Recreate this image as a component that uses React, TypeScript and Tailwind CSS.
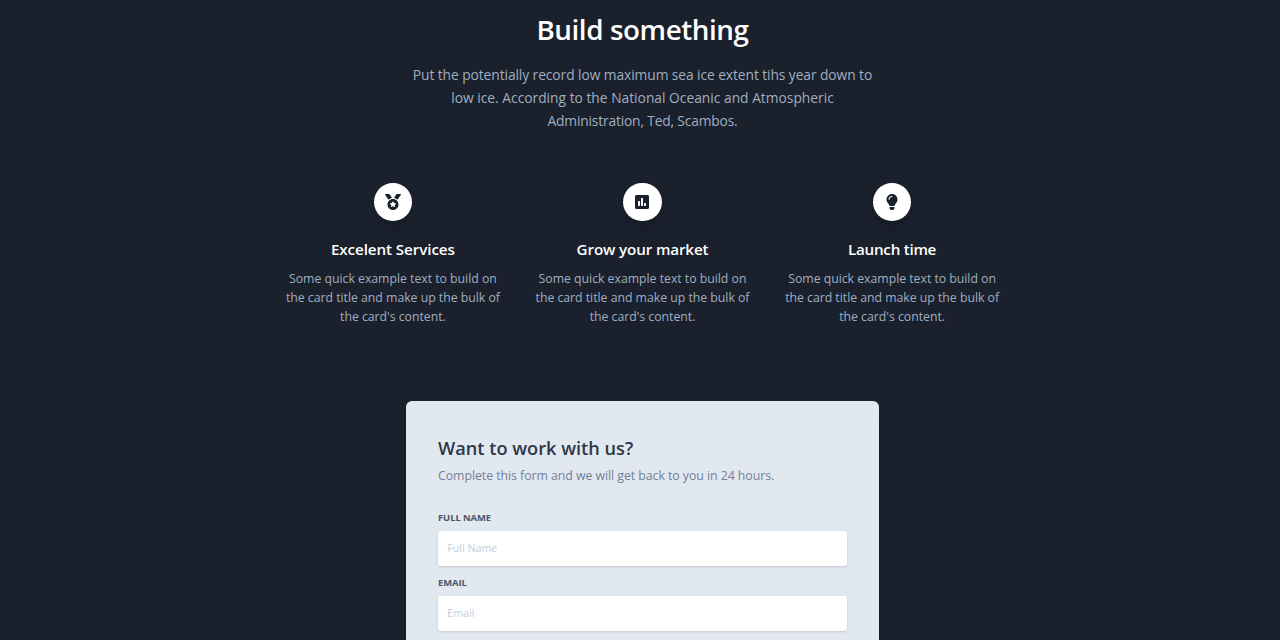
import { FaLightbulb, FaMedal, FaPoll } from "react-icons/fa";
import type { IconType } from "react-icons";

const features: { title: string; tracking: string; Icon: IconType }[] = [
  { title: "Excelent Services", tracking: "tracking-[-0.09px]", Icon: FaMedal },
  { title: "Grow your market", tracking: "tracking-[-0.14px]", Icon: FaPoll },
  { title: "Launch time", tracking: "tracking-[-0.27px]", Icon: FaLightbulb },
];

function Feature({ title, tracking, Icon }: (typeof features)[number]) {
  return (
    <div className="flex w-[249.6px] flex-col items-center text-center">
      <div className="flex size-[38.4px] items-center justify-center rounded-full bg-white text-[#1a202c] shadow-lg">
        <Icon className="size-4" />
      </div>
      <h3 className={`mt-[15.6px] text-[15.2px] leading-6 font-semibold text-white ${tracking}`}>{title}</h3>
      <p className="mt-2 text-[12.3px] leading-[19px] tracking-[-0.03px] whitespace-nowrap text-[#a0aec0]">
        Some quick example text to build on
        <br />
        the card title and make up the bulk of
        <br />
        the card's content.
      </p>
    </div>
  );
}

function Field({ label, placeholder }: { label: string; placeholder: string }) {
  return (
    <label className="flex flex-col">
      <span className="mb-[6px] text-[9.4px] leading-[14px] font-bold tracking-[-0.05px] text-[#4a5568] uppercase">{label}</span>
      <input
        placeholder={placeholder}
        className="mb-[9.8px] h-[35.2px] w-full rounded-[3px] bg-white px-[9.2px] pb-[2px] text-[10.7px] text-[#4a5568] shadow outline-none placeholder:text-[#c3cfdc]"
      />
    </label>
  );
}

export default function App() {
  return (
    <main className="flex h-[640px] w-full flex-col items-center overflow-hidden bg-[#1a202c] pl-[5px] font-['Open_Sans','Noto_Sans',sans-serif]">
      <h2 className="mt-[11px] text-[27.8px] leading-9 font-semibold tracking-[-0.42px] text-white">Build something</h2>
      <p className="mt-[16px] text-center text-[13.8px] leading-[23px] whitespace-nowrap text-[#a0aec0]">
        <span className="block tracking-[-0.08px]">Put the potentially record low maximum sea ice extent tihs year down to</span>
        <span className="block">low ice. According to the National Oceanic and Atmospheric</span>
        <span className="block tracking-[-0.17px]">Administration, Ted, Scambos.</span>
      </p>
      <section className="mt-[51px] flex">
        {features.map((f) => (
          <Feature key={f.title} {...f} />
        ))}
      </section>
      <section className="mt-[75px] flex h-[480px] w-[473px] shrink-0 flex-col rounded-[6px] bg-[#e2e8f0] p-8 shadow-lg">
        <h4 className="mt-[1px] text-[18.2px] leading-[29px] font-semibold text-[#2d3748]">Want to work with us?</h4>
        <p className="mt-[3px] mb-[25.8px] text-[12.3px] leading-[19.2px] tracking-[-0.04px] text-[#718096]">
          Complete this form and we will get back to you in 24 hours.
        </p>
        <Field label="Full Name" placeholder="Full Name" />
        <Field label="Email" placeholder="Email" />
      </section>
    </main>
  );
}
